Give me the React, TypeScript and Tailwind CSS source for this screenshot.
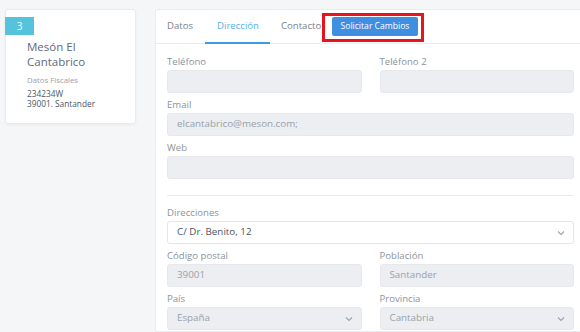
import React from "react";

const font = { fontFamily: '"Open Sans", "Liberation Sans", sans-serif' };

function Chevron() {
  return (
    <svg width="8" height="5" viewBox="0 0 8 5" className="absolute right-[8px] top-1/2 -translate-y-1/2">
      <path d="M1 1 L4 4 L7 1" fill="none" stroke="#9aa3ad" strokeWidth="1.1" />
    </svg>
  );
}

function Field({
  label,
  value,
  select,
  white,
}: {
  label: string;
  value?: string;
  select?: boolean;
  white?: boolean;
}) {
  return (
    <div className="flex flex-col min-w-0">
      <div className="h-[14px] leading-[14px] text-[9.6px] text-[#8d939b] mb-[1px]">{label}</div>
      <div
        className={`relative h-[23px] rounded-[3px] flex items-center pl-[9px] text-[9.8px] ${
          white
            ? "bg-white border border-[#e3e6ea] text-[#4a5560]"
            : "bg-[#eceef1] border border-[#e6e8eb] text-[#9aa1a9]"
        }`}
      >
        {value}
        {select && <Chevron />}
      </div>
    </div>
  );
}

export default function App() {
  return (
    <div className="w-[580px] h-[332px] overflow-hidden bg-[#f5f6f8] flex" style={font}>
      <div className="pl-[5px] pt-[9px] w-[155px] shrink-0">
        <div className="w-[131px] h-[115px] bg-white border border-[#e8ebef] rounded-[3px] shadow-[0_1px_3px_rgba(0,0,0,0.05)] pt-[7px]">
          <div className="w-[29px] h-[18px] -ml-[1px] bg-[#56c3dc] text-white text-[10px] flex items-center justify-center">
            3
          </div>
          <div className="pl-[21px] pt-[5px]">
            <div className="text-[11.5px] leading-[14.5px] text-[#5d6a7e]">
              Mesón El
              <br />
              Cantabrico
            </div>
            <div className="text-[7.8px] leading-[10px] text-[#9aa2ae] mt-[6px]">Datos Fiscales</div>
            <div className="text-[8.3px] leading-[10px] text-[#4d5563] mt-[4px]">
              234234W
              <br />
              39001. Santander
            </div>
          </div>
        </div>
      </div>
      <div className="mt-[9px] w-[440px] shrink-0 bg-white border border-[#e8ebef] rounded-tl-[3px] flex flex-col">
        <div className="h-[34px] border-b border-[#e8ebef] flex items-stretch text-[9.6px]">
          <div className="w-[49px] pl-[11px] flex items-center text-[#7a828b]">Datos</div>
          <div className="w-[65px] pl-[12px] flex items-center text-[#5cafe3] border-b-2 border-[#3d9be6] -mb-[1px]">
            Dirección
          </div>
          <div className="w-[62px] pl-[11px] flex items-center text-[#7a828b]">Contacto</div>
          <div className="relative flex items-center">
            <div className="h-[19px] w-[86px] justify-center rounded-[2px] bg-[#3e8ee2] text-white text-[8.6px] flex items-center">
              Solicitar Cambios
            </div>
            <div className="absolute left-[-10px] top-[3px] w-[102px] h-[29px] border-[3px] border-[#e8131c]" />
          </div>
        </div>
        <div className="pl-[11px] w-[418px] pt-[11px] flex flex-col">
          <div className="grid grid-cols-2 gap-x-[18px] gap-y-[5px]">
            <Field label="Teléfono" />
            <Field label="Teléfono 2" />
            <div className="col-span-2">
              <Field label="Email" value="elcantabrico@meson.com;" />
            </div>
            <div className="col-span-2">
              <Field label="Web" />
            </div>
          </div>
          <div className="h-px bg-[#e9ecef] mt-[16px] mb-[10px]" />
          <div className="grid grid-cols-2 gap-x-[18px] gap-y-[5px]">
            <div className="col-span-2">
              <Field label="Direcciones" value="C/ Dr. Benito, 12" select white />
            </div>
            <Field label="Código postal" value="39001" />
            <Field label="Población" value="Santander" />
            <Field label="País" value="España" select />
            <Field label="Provincia" value="Cantabria" select />
          </div>
        </div>
      </div>
    </div>
  );
}
